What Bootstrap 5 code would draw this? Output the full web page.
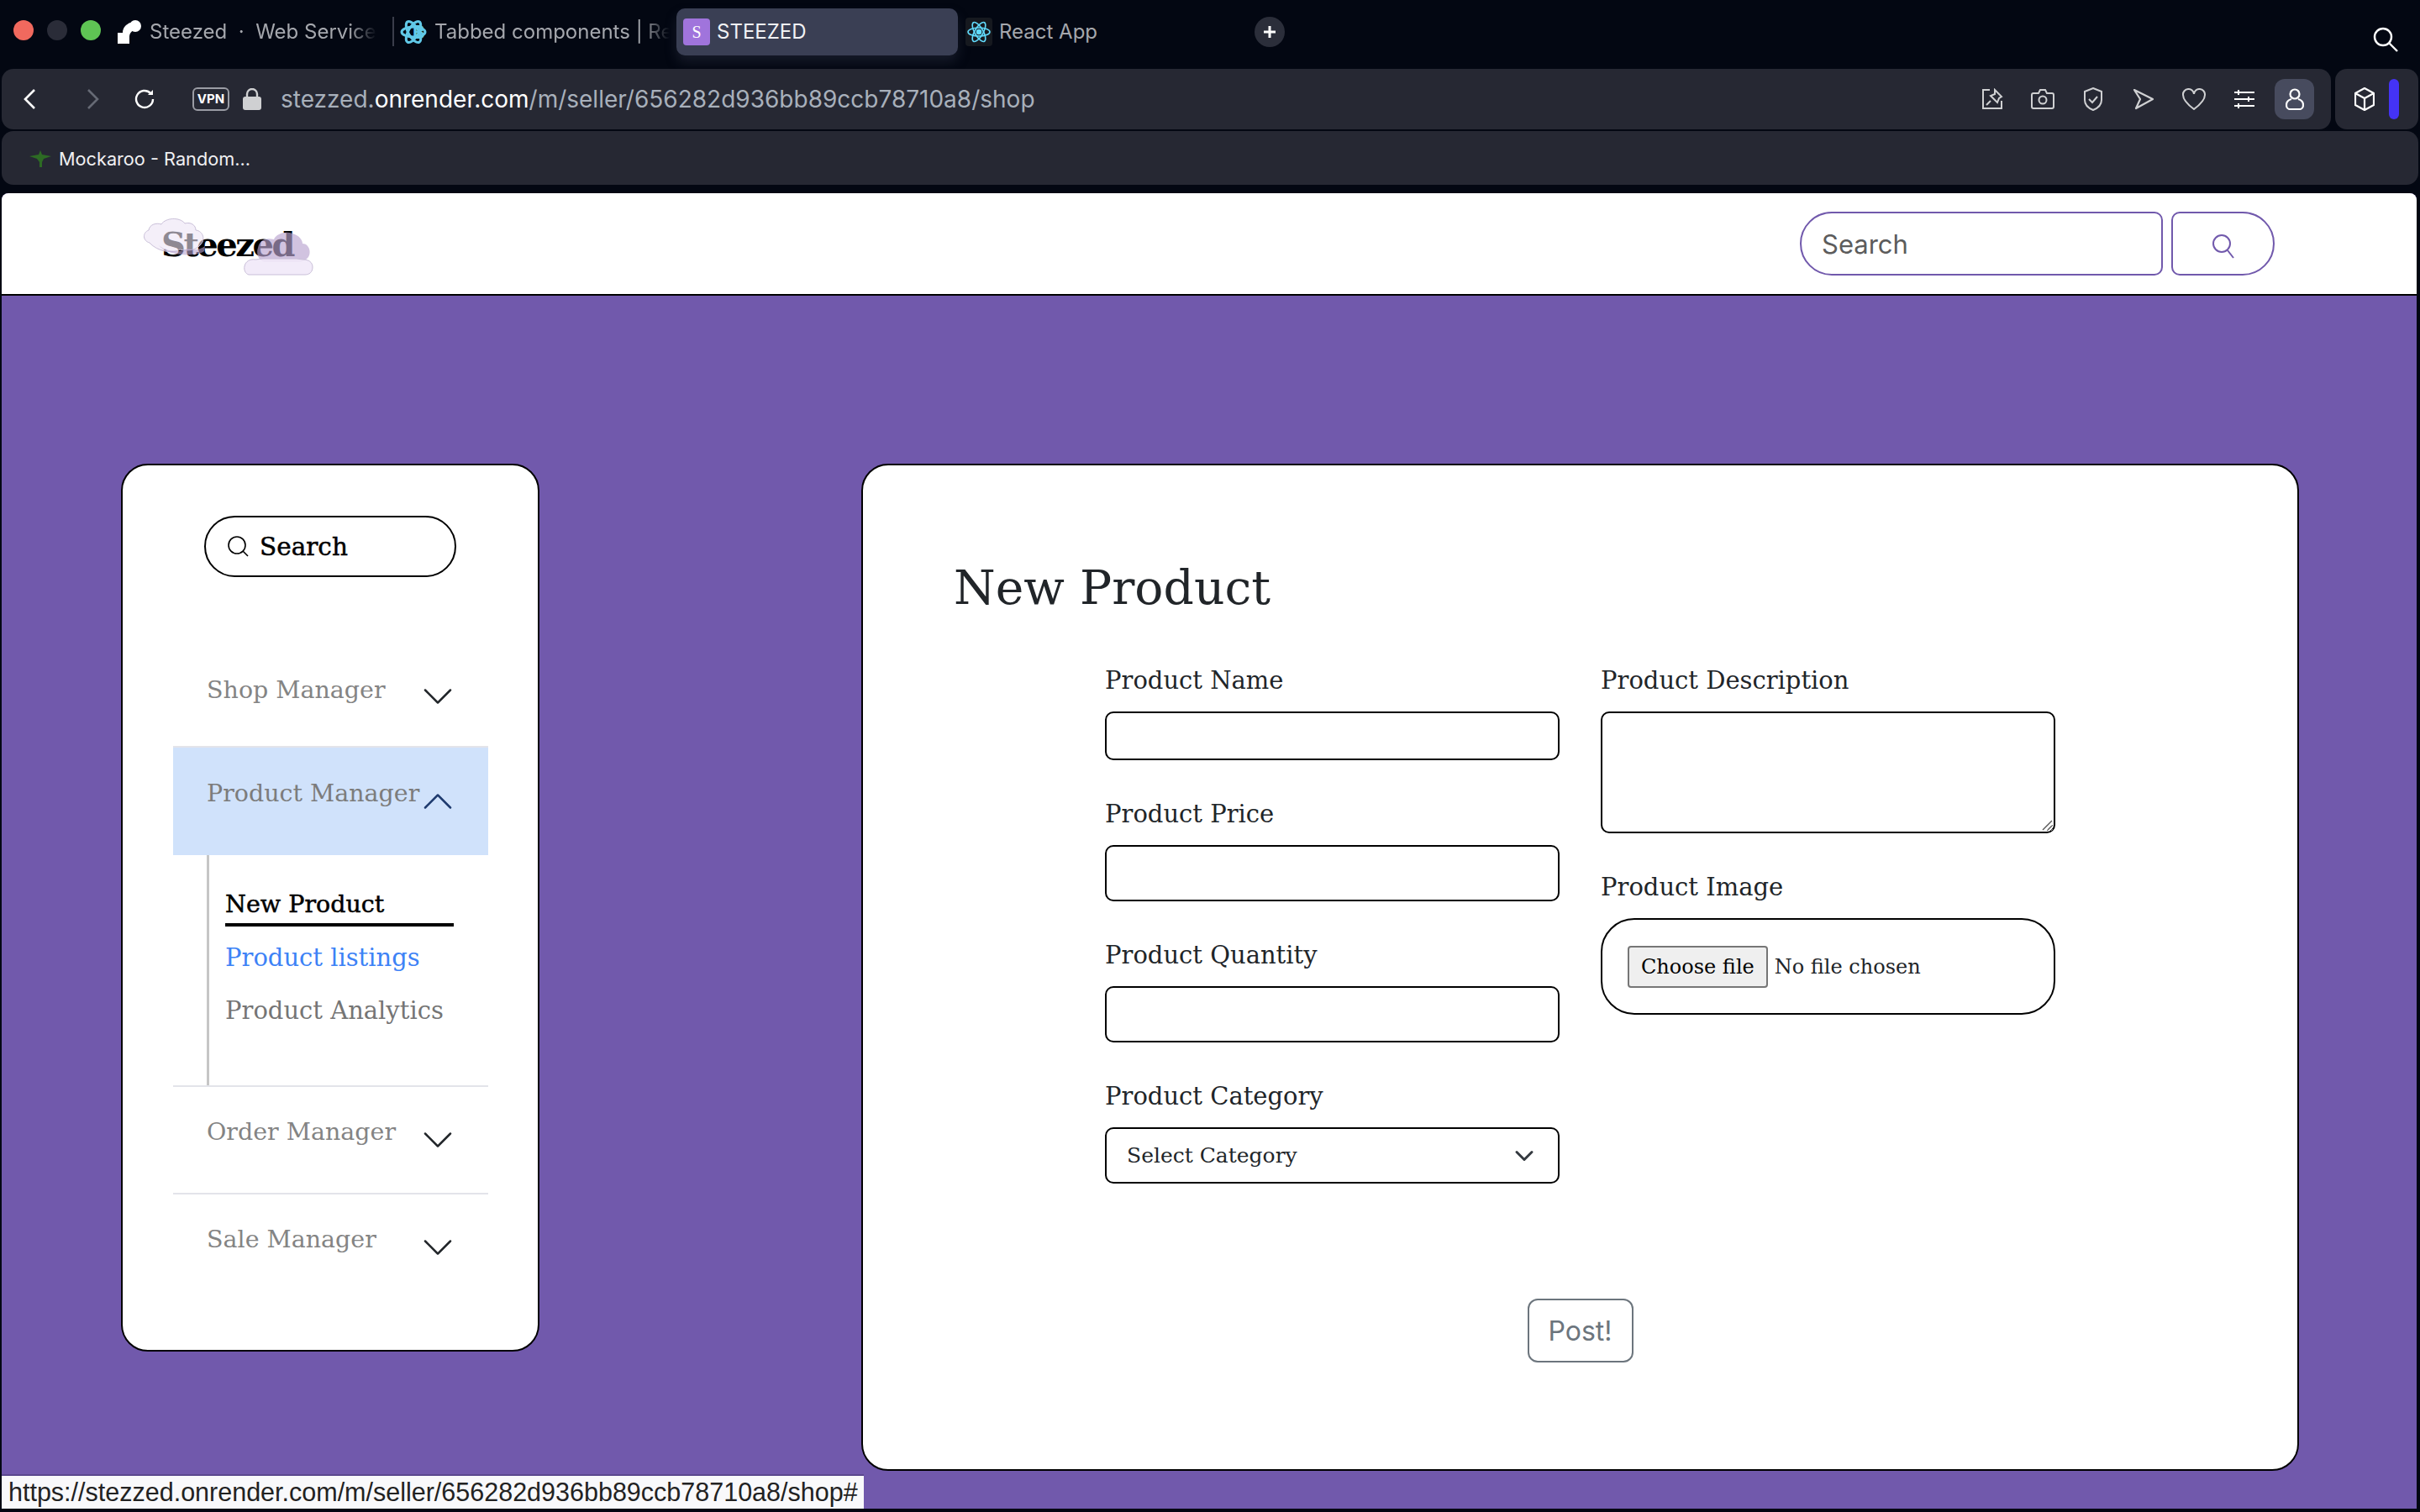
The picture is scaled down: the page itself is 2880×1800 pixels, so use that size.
<!DOCTYPE html>
<html lang="en">
<head>
    <meta charset="UTF-8">
    <meta name="viewport" content="width=device-width, initial-scale=1.0">
    <title>STEEZED</title>
    <link href="https://cdn.jsdelivr.net/npm/bootstrap@5.3.0/dist/css/bootstrap.min.css" rel="stylesheet">
    <style>
        html, body { height: 1800px; }
        body { background: #030712; font-family: Inter, sans-serif; overflow: hidden; position: relative; }
        svg { display: block; flex-shrink: 0; }

        /* browser chrome */
        .tab-strip { height: 82px; padding-top: 10px; }
        .light { width: 24px; height: 24px; border-radius: 50%; margin-top: 14px; margin-left: 16px; }
        .tab-cell { height: 56px; font-size: 24px; color: #a5a7ad; white-space: nowrap; flex-shrink: 0; }
        .tab-fade { -webkit-mask-image: linear-gradient(90deg, #000 88%, transparent 100%); mask-image: linear-gradient(90deg, #000 88%, transparent 100%); }
        .tab-active { background: #3a3f54; border-radius: 10px; color: #f1f2f5; box-shadow: 0 8px 14px rgba(58, 63, 84, .35); }
        .tab-fav { width: 32px; height: 32px; border-radius: 4px; background: #a074dc; color: #fff; font: 20px "Liberation Serif", serif; }
        .new-tab { width: 36px; height: 36px; border-radius: 50%; background: #2b2e3a; margin-top: 10px; }
        .chrome-bar { background: #262833; border-radius: 14px; }
        .url-bar { height: 72px; margin-left: 2px; width: 2772px; }
        .side-bar { height: 72px; width: 99px; margin-left: 5px; }
        .marks-bar { height: 64px; margin: 2px 2px 0; padding-top: 2px; font-size: 21.7px; color: #f0f0f2; }
        .url-text { font-size: 28px; color: #a8b0bb; }
        .url-text b { font-weight: 400; color: #fff; }
        .vpn-tag { width: 44px; height: 28px; border: 2px solid #9a9ca4; border-radius: 6px; color: #fff; font-size: 15px; font-weight: 700; }
        .tool-slot { width: 60px; }
        .user-slot { width: 47px; height: 48px; background: #474b5e; border-radius: 12px; }
        .panel-pill { width: 12px; height: 48px; border-radius: 6px; background: #4433f5; }

        /* page */
        .site-page { position: absolute; top: 230px; left: 2px; width: 2874px; height: 1566px; background: #7159ac; border-radius: 8px 8px 0 0; overflow: hidden; }
        .site-nav { height: 122px; background: #fff; border-bottom: 2px solid #000; padding: 0 169px 0 0; }
        .logo-box { position: relative; width: 210px; height: 80px; margin: -2px 0 0 166px; }
        .logo-word { position: absolute; left: 24px; top: 17px; font: 700 40px/50px "DejaVu Serif", serif; letter-spacing: -2.5px; color: #000; }
        .logo-clouds { position: absolute; left: 0; top: 0; }
        .nav-search { width: 432px; height: 76px; border: 2px solid #7159ac; border-radius: 38px 10px 10px 38px; font-size: 31px; padding-left: 24px; font-family: Inter, sans-serif; }
        .nav-search::placeholder { color: #5c5c5c; }
        .nav-search-btn { width: 123px; height: 76px; margin-left: 10px; border: 2px solid #7159ac; border-radius: 10px 38px 38px 10px; background: #fff; padding-top: 6px; }

        .work-area { padding: 200px 0 0 142px; font-family: "DejaVu Serif", serif; }
        .side-card { width: 498px; height: 1057px; border: 2px solid #000; border-radius: 32px; background: #fff; padding-top: 60px; }
        .side-search { position: relative; width: 300px; height: 73px; margin: 0 0 0 97px; }
        .side-search input { width: 100%; height: 100%; border: 2px solid #000; border-radius: 37px; padding-left: 64px; font-size: 29.5px; color: #000; background: #fff; }
        .side-search input::placeholder { color: #000; opacity: 1; -webkit-text-stroke: .5px #000; }
        .side-search svg { position: absolute; left: 28px; top: 24px; }
        .side-acc { width: 375px; margin: 82px 0 0 60px; --bs-accordion-border-width: 0; --bs-accordion-border-radius: 0; --bs-accordion-inner-border-radius: 0; --bs-accordion-btn-icon-width: 40px; --bs-accordion-btn-padding-x: 41px; --bs-accordion-btn-focus-box-shadow: none; --bs-accordion-active-bg: #d0e2fb; --bs-accordion-active-color: #7c7c7c; --bs-accordion-btn-color: #848484;
            --bs-accordion-btn-active-icon: url("data:image/svg+xml,%3csvg xmlns='http://www.w3.org/2000/svg' viewBox='0 0 16 16' fill='%231e3a6e'%3e%3cpath fill-rule='evenodd' d='M1.646 4.646a.5.5 0 0 1 .708 0L8 10.293l5.646-5.647a.5.5 0 0 1 .708.708l-6 6a.5.5 0 0 1-.708 0l-6-6a.5.5 0 0 1 0-.708z'/%3e%3c/svg%3e"); }
        .side-acc .accordion-button { height: 126px; padding: 0 40px 0 40px; font-size: 28.5px; box-shadow: none; }
        .side-acc .accordion-button span { margin-bottom: 18px; white-space: nowrap; }
        .side-acc .accordion-item + .accordion-item { border-top: 2px solid #e3e4ea; }
        .side-acc .acc-first .accordion-button { height: 119px; }
        .side-acc .acc-first .accordion-button span { margin-bottom: 12px; }
        .side-acc .acc-open .accordion-button { height: 128px; }
        .side-acc .acc-open, .side-acc .acc-open + .accordion-item { border-top: 0; }
        .sub-menu { height: 274px; margin-left: 40px; border-left: 3px solid #c6c6c6; padding: 39px 0 0 19px; font-size: 29px; }
        .sub-menu a { display: block; text-decoration: none; line-height: 40px; margin-bottom: 23px; color: #757575; white-space: nowrap; }
        .sub-menu a.sub-current { color: #000; width: 272px; border-bottom: 4px solid #000; height: 46px; margin-bottom: 17px; -webkit-text-stroke: .5px #000; font-size: 28.5px; }
        .sub-menu a.sub-link { color: #3d82f6; }
        .acc-rule { height: 2px; background: #e3e4ea; }

        .product-card { width: 1711px; height: 1199px; margin-left: 383px; border: 2px solid #000; border-radius: 32px; background: #fff; padding: 113px 0 0 108px; }
        .product-title { font-size: 56.8px; line-height: 65px; margin: 0 0 56px; font-weight: 400; color: #212529; font-family: "DejaVu Serif", serif; }
        .form-cols { margin-left: 180px; gap: 49px; }
        .form-col { width: 541px; }
        .form-slot { margin-bottom: 42px; position: relative; }
        .form-slot .form-label { font-size: 29px; line-height: 40px; padding-top: 2px; margin-bottom: 17px; display: block; color: #212529; white-space: nowrap; }
        .form-slot .form-control, .form-slot .form-select { border: 2px solid #000; border-radius: 10px; height: 67px; }
        .form-slot .field-short { height: 58px; }
        .form-slot textarea.form-control { height: 145px; }
        .text-grip { position: absolute; right: 3px; bottom: 3px; }
        .form-slot .form-select { font-size: 25px; padding: 0 60px 0 24px; color: #212529; background-size: 32px 24px; background-position: right 24px center; }
        .file-pill { height: 115px; border: 2px solid #000; border-radius: 40px; padding: 0 30px; font-size: 24px; color: #212529; }
        .file-btn { height: 50px; line-height: 46px; margin: 0 8px 0 0; padding: 0 14px; background: #efefef; border: 2px solid #767676; border-radius: 4px; color: #000; font-size: 24px; }
        .post-row { margin: 137px 0 0 -108px; }
        .post-btn { width: 126px; height: 76px; padding: 0; border: 2px solid #6c757d; border-radius: 12px; font: 32px Inter, sans-serif; color: #6c757d; }
        .status-tip { position: absolute; left: 0; bottom: 0; width: 1026px; height: 41px; background: #f9f9fb; border-top: 2px solid #5b478e; font: 30.5px/39px "Liberation Sans", sans-serif; color: #222; padding-left: 8px; white-space: nowrap; }
    </style>
</head>
<body>
    <div class="tab-strip d-flex align-items-start">
        <div class="light" style="background:#f1695e"></div>
        <div class="light" style="background:#2a2c38"></div>
        <div class="light" style="background:#5fc454"></div>
        <svg style="margin:14px 0 0 20px" width="28" height="28" viewBox="0 0 28 28"><circle cx="21" cy="7" r="7" fill="#fff"/><path d="M0 28V15H6C6 9 10 5 15 3L20 12C16 13 14 16 14 20V28Z" fill="#fff"/></svg>
        <div class="tab-cell tab-fade d-flex align-items-center" style="width:270px;margin-left:10px">Steezed &nbsp;·&nbsp; Web Service</div>
        <div style="width:2px;height:35px;background:#3a3d4a;margin:10px 0 0 19px"></div>
        <svg style="margin:10px 0 0 7px" width="32" height="36" viewBox="0 0 32 36" fill="none" stroke="#61c9e8" stroke-width="3"><ellipse cx="16" cy="18" rx="14" ry="6"/><ellipse cx="16" cy="18" rx="14" ry="6" transform="rotate(60 16 18)"/><ellipse cx="16" cy="18" rx="14" ry="6" transform="rotate(120 16 18)"/><text x="15" y="26" font-size="22" font-weight="700" fill="#61c9e8" stroke="none" font-family="Inter">B</text></svg>
        <div class="tab-cell tab-fade d-flex align-items-center" style="width:280px;margin-left:9px">Tabbed components | Re</div>
        <div class="tab-cell tab-active d-flex align-items-center" style="width:335px;margin-left:8px;padding-left:8px">
            <div class="tab-fav d-flex align-items-center justify-content-center">S</div>
            <span style="margin-left:8px">STEEZED</span>
        </div>
        <svg style="margin:11px 0 0 9px" width="32" height="34" viewBox="0 0 32 34" fill="none" stroke="#61dafb" stroke-width="1.6"><rect width="32" height="34" rx="4" fill="#16191f" stroke="none"/><ellipse cx="16" cy="17" rx="13" ry="5"/><ellipse cx="16" cy="17" rx="13" ry="5" transform="rotate(60 16 17)"/><ellipse cx="16" cy="17" rx="13" ry="5" transform="rotate(120 16 17)"/><circle cx="16" cy="17" r="2.5" fill="#61dafb"/></svg>
        <div class="tab-cell d-flex align-items-center" style="margin-left:8px;width:304px">React App</div>
        <div class="new-tab d-flex align-items-center justify-content-center"><svg width="16" height="16" viewBox="0 0 16 16"><path d="M8 1v14M1 8h14" stroke="#fff" stroke-width="3"/></svg></div>
        <svg style="margin:22px 0 0 1294px" width="32" height="30" viewBox="0 0 32 30" fill="none" stroke="#fff" stroke-width="2.4"><circle cx="13" cy="12" r="10"/><path d="M20 19l10 10"/></svg>
    </div>

    <div class="d-flex">
        <div class="chrome-bar url-bar d-flex align-items-center">
            <svg style="margin-left:25px" width="16" height="26" viewBox="0 0 16 26" fill="none" stroke="#fff" stroke-width="2.6"><path d="M14 2 3 13l11 11"/></svg>
            <svg style="margin-left:60px" width="16" height="26" viewBox="0 0 16 26" fill="none" stroke="#666a75" stroke-width="2.6"><path d="M2 2l11 11L2 24"/></svg>
            <svg style="margin-left:40px" width="26" height="26" viewBox="0 0 26 26" fill="none" stroke="#fff" stroke-width="2.4"><path d="M23 13a10 10 0 1 1-3-7.2"/><path d="M23 2v6h-6" fill="#fff" stroke="none"/></svg>
            <div class="vpn-tag d-flex align-items-center justify-content-center" style="margin-left:44px">VPN</div>
            <svg style="margin-left:16px" width="22" height="26" viewBox="0 0 22 26"><path d="M5 11V7a6 6 0 0 1 12 0v4" fill="none" stroke="#cfd0d2" stroke-width="2.4"/><rect y="10" width="22" height="16" rx="3" fill="#cfd0d2"/></svg>
            <div class="url-text" style="margin-left:23px">stezzed.<b>onrender.com</b>/m/seller/656282d936bb89ccb78710a8/shop</div>
            <div class="ms-auto d-flex align-items-center" style="margin-right:20px">
                <div class="tool-slot d-flex justify-content-center"><svg width="26" height="26" viewBox="0 0 26 26" fill="none" stroke="#cfd0d2" stroke-width="2"><path d="M10 2H2v22h22v-9"/><path d="M16 2l8 8-3 2-2 5-8-8 5-2zM11 15l-5 5"/></svg></div>
                <div class="tool-slot d-flex justify-content-center"><svg width="28" height="26" viewBox="0 0 28 26" fill="none" stroke="#cfd0d2" stroke-width="2"><path d="M3 6h6l2-4h6l2 4h6a2 2 0 0 1 2 2v14a2 2 0 0 1-2 2H3a2 2 0 0 1-2-2V8a2 2 0 0 1 2-2z"/><circle cx="14" cy="14" r="4.5"/></svg></div>
                <div class="tool-slot d-flex justify-content-center"><svg width="24" height="28" viewBox="0 0 24 28" fill="none" stroke="#cfd0d2" stroke-width="2"><path d="M12 1l10 4v10c0 6-5 10-10 12C7 25 2 21 2 15V5z"/><path d="M7 14l4 4 6-7"/></svg></div>
                <div class="tool-slot d-flex justify-content-center"><svg width="26" height="26" viewBox="0 0 26 26" fill="none" stroke="#cfd0d2" stroke-width="2.2" stroke-linejoin="round"><path d="M2 2l22 11L4 24l5-11z"/></svg></div>
                <div class="tool-slot d-flex justify-content-center"><svg width="28" height="26" viewBox="0 0 28 26" fill="none" stroke="#cfd0d2" stroke-width="2"><path d="M14 25C6 19 1 14 1 8a6.5 6.5 0 0 1 13-1 6.5 6.5 0 0 1 13 1c0 6-5 11-13 17z"/></svg></div>
                <div class="tool-slot d-flex justify-content-center"><svg width="24" height="24" viewBox="0 0 24 24" fill="none" stroke="#fff" stroke-width="2"><path d="M0 4h24M0 12h24M0 20h24M5 1v6M17 9v6M5 17v6"/></svg></div>
                <div class="user-slot d-flex align-items-center justify-content-center" style="margin-left:6px"><svg width="22" height="26" viewBox="0 0 22 26" fill="none" stroke="#fff" stroke-width="2.2"><circle cx="11" cy="7" r="5.5"/><path d="M7 13c-4 1-6 4-6 7 0 3 2 5 4 5h12c2 0 4-2 4-5 0-3-2-6-6-7"/></svg></div>
            </div>
        </div>
        <div class="chrome-bar side-bar d-flex align-items-center">
            <svg style="margin-left:23px" width="24" height="28" viewBox="0 0 24 28" fill="none" stroke="#fff" stroke-width="2.2" stroke-linejoin="round"><path d="M12 1l11 6v14l-11 6-11-6V7zM1 7l11 6 11-6M12 13v14"/></svg>
            <div class="panel-pill" style="margin-left:17px"></div>
        </div>
    </div>

    <div class="chrome-bar marks-bar d-flex align-items-center">
        <svg style="margin-left:33px" width="26" height="20" viewBox="0 0 26 20"><path d="M13 0l2 5 11 2-9 3-2 4v6h-3v-6L9 10 0 7l11-2z" fill="#2d6b24"/></svg>
        <span style="margin-left:9px">Mockaroo - Random...</span>
    </div>

    <div class="site-page">
        <nav class="site-nav d-flex align-items-center justify-content-between">
            <div class="logo-box">
                <div class="logo-word">Steezed</div>
                <svg class="logo-clouds" width="210" height="80" viewBox="0 0 210 80">
                    <path d="M139 46c2-10 10-12 19-10 3-7 14-10 22-7 8 2 12 8 12 12 9 0 12 14 4 19-2 1-5 3-8 3h-42c-8-3-9-12-7-17z" fill="#b9a3cf" fill-opacity=".65"/>
                    <path d="M10 40c-8-2-9-12-1-15 1-7 9-9 15-7 5-8 22-9 28-1 7-2 13 2 13 8 9 1 12 12 5 18-5 6-16 7-24 5-8 5-26 3-36-8z" fill="#ede4f5" fill-opacity=".6" stroke="#c9bfd8"/>
                    <path d="M20 42c8 9 28 10 35 5 8 2 16 1 21-3l-1 6c-7 6-42 8-55-8z" fill="#b8a3cf" fill-opacity=".6"/>
                    <path d="M128 78c-4-1-6-6-5-10 1-6 7-9 13-8 3 0 6-1 9-1h40c3 0 5 1 8 1 6 0 11 3 11 9s-4 9-9 9z" fill="#f1e9f8" fill-opacity=".9" stroke="#c9bfd8"/>
                </svg>
            </div>
            <div class="d-flex align-items-center">
                <input class="form-control nav-search" type="search" placeholder="Search">
                <button class="nav-search-btn d-flex align-items-center justify-content-center" type="button"><svg width="28" height="30" viewBox="0 0 28 30" fill="none" stroke="#7159ac" stroke-width="2"><circle cx="12" cy="12" r="10"/><path d="M19 20l7 9"/></svg></button>
            </div>
        </nav>

        <div class="work-area d-flex align-items-start">
            <aside class="side-card">
                <div class="side-search">
                    <input type="text" placeholder="Search">
                    <svg width="26" height="26" viewBox="0 0 26 26" fill="none" stroke="#000" stroke-width="1.6"><circle cx="11" cy="11" r="10"/><path d="M18 18l6 6"/></svg>
                </div>
                <div class="accordion side-acc" id="side-menu">
                    <div class="accordion-item acc-first">
                        <h2 class="accordion-header"><button class="accordion-button collapsed" type="button" data-bs-toggle="collapse" data-bs-target="#m1"><span>Shop Manager</span></button></h2>
                        <div id="m1" class="accordion-collapse collapse" data-bs-parent="#side-menu"></div>
                    </div>
                    <div class="accordion-item acc-open">
                        <h2 class="accordion-header"><button class="accordion-button" type="button" data-bs-toggle="collapse" data-bs-target="#m2"><span>Product Manager</span></button></h2>
                        <div id="m2" class="accordion-collapse collapse show" data-bs-parent="#side-menu">
                            <div class="sub-menu">
                                <a class="sub-current" href="#">New Product</a>
                                <a class="sub-link" href="#">Product listings</a>
                                <a href="#">Product Analytics</a>
                            </div>
                            <div class="acc-rule"></div>
                        </div>
                    </div>
                    <div class="accordion-item">
                        <h2 class="accordion-header"><button class="accordion-button collapsed" type="button" data-bs-toggle="collapse" data-bs-target="#m3"><span>Order Manager</span></button></h2>
                        <div id="m3" class="accordion-collapse collapse" data-bs-parent="#side-menu"></div>
                    </div>
                    <div class="accordion-item">
                        <h2 class="accordion-header"><button class="accordion-button collapsed" type="button" data-bs-toggle="collapse" data-bs-target="#m4"><span>Sale Manager</span></button></h2>
                        <div id="m4" class="accordion-collapse collapse" data-bs-parent="#side-menu"></div>
                    </div>
                </div>
            </aside>

            <main class="product-card">
                <h1 class="product-title">New Product</h1>
                <form>
                    <div class="form-cols d-flex">
                        <div class="form-col">
                            <div class="form-slot"><label class="form-label">Product Name</label><input class="form-control field-short" type="text"></div>
                            <div class="form-slot"><label class="form-label">Product Price</label><input class="form-control" type="text"></div>
                            <div class="form-slot"><label class="form-label">Product Quantity</label><input class="form-control" type="text"></div>
                            <div class="form-slot mb-0"><label class="form-label">Product Category</label>
                                <select class="form-select"><option>Select Category</option></select>
                            </div>
                        </div>
                        <div class="form-col">
                            <div class="form-slot"><label class="form-label">Product Description</label><textarea class="form-control"></textarea>
                                <svg class="text-grip" width="13" height="13" viewBox="0 0 13 13" fill="none" stroke="#555" stroke-width="1.4"><path d="M1 12 12 1M7 12l5-5"/></svg>
                            </div>
                            <div class="form-slot"><label class="form-label">Product Image</label>
                                <div class="file-pill d-flex align-items-center">
                                    <label class="file-btn" for="product-image">Choose file</label>
                                    <span>No file chosen</span>
                                    <input class="d-none" id="product-image" type="file">
                                </div>
                            </div>
                        </div>
                    </div>
                    <div class="post-row d-flex justify-content-center">
                        <button class="btn btn-outline-secondary post-btn" type="button">Post!</button>
                    </div>
                </form>
            </main>
        </div>

        <div class="status-tip">https://stezzed.onrender.com/m/seller/656282d936bb89ccb78710a8/shop#</div>
    </div>

    <script src="https://cdn.jsdelivr.net/npm/bootstrap@5.3.0/dist/js/bootstrap.bundle.min.js"></script>
</body>
</html>
